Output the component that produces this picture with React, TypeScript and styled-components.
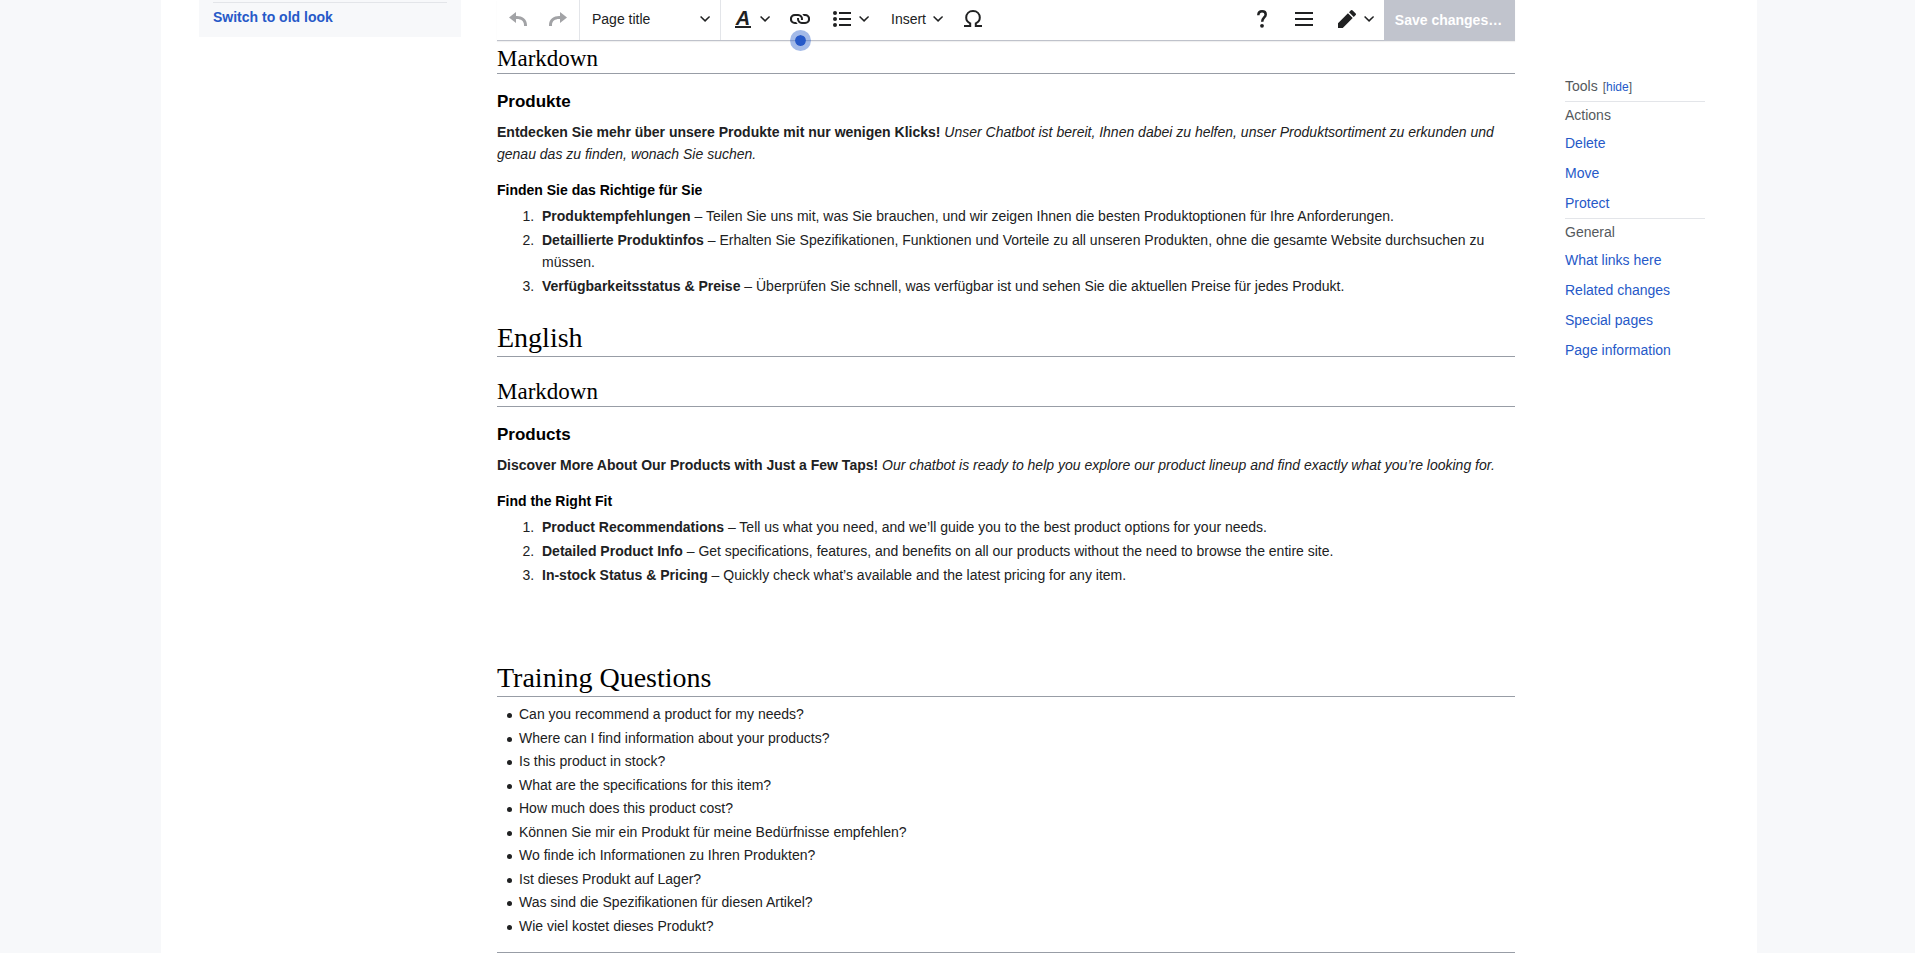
import React from "react";
import styled, { createGlobalStyle } from "styled-components";

const color = {
  text: "#202122",
  heading: "#000000",
  muted: "#54595d",
  link: "#2659c8",
  panel: "#f7f8fa",
  hairline: "#e3e5e9",
  rule: "#989da6",
  toolbarLine: "#bfc2cb",
  disabled: "#c1c4cd",
};

const GlobalStyle = createGlobalStyle`
  *, *::before, *::after { box-sizing: border-box; }
  body {
    margin: 0;
    background: ${color.panel};
    color: ${color.text};
    font-family: "Liberation Sans", Arial, Helvetica, sans-serif;
    font-size: 14px;
    line-height: 22px;
  }
`;

const Viewport = styled.div`
  height: 100vh;
  overflow: hidden;
  padding-left: 3px;
`;

const Container = styled.div`
  display: grid;
  grid-template-columns: 262px minmax(0, 1fr) 154px;
  column-gap: 36px;
  max-width: 1596px;
  min-height: 100%;
  margin: 0 auto;
  padding: 0 52px 0 38px;
  background: #fff;
`;

const MenuPanel = styled.nav`
  align-self: start;
  padding: 2px 14px 9px;
  background: ${color.panel};
`;

const MenuFooter = styled.div`
  padding-top: 3px;
  border-top: 1px solid ${color.hairline};
`;

const Link = styled.a<{ $bold?: boolean }>`
  color: ${color.link};
  font-weight: ${(p) => (p.$bold ? 700 : 400)};
  text-decoration: none;
`;

const Toolbar = styled.div`
  display: flex;
  height: 41px;
  border-bottom: 1px solid ${color.toolbarLine};
  box-shadow: 0 1px 1px rgba(0, 0, 0, 0.06);
`;

const ToolGroup = styled.div<{ $divided?: boolean; $end?: boolean }>`
  display: flex;
  padding: 0 ${(p) => (p.$divided ? "1px" : "0")};
  margin-left: ${(p) => (p.$end ? "auto" : "0")};
  border-right: ${(p) => (p.$divided ? `1px solid ${color.hairline}` : "0")};
`;

const buttonReset = `
  display: flex;
  align-items: center;
  margin: 0;
  border: 0;
  background: none;
  font: inherit;
  color: inherit;
`;

const IconButton = styled.button<{ $wide?: boolean }>`
  ${buttonReset}
  position: relative;
  justify-content: center;
  width: ${(p) => (p.$wide ? "42px" : "40px")};
  padding: 0 0 2px;
  &:disabled { color: #a2a3a6; }
`;

const DropButton = styled.button`
  ${buttonReset}
  gap: 6px;
  padding: 0 9px 2px 12px;
`;

const FormatButton = styled(DropButton)`
  justify-content: space-between;
  width: 141px;
  border-right: 1px solid ${color.hairline};
`;

const SaveButton = styled.button`
  ${buttonReset}
  justify-content: center;
  width: 131px;
  height: 41px;
  padding: 0 2px 2px 0;
  background: ${color.disabled};
  font-weight: 700;
  &:disabled { color: #fff; }
`;

const StyleGlyph = styled.span`
  width: 16px;
  margin: 0 2px;
  border-bottom: 2px solid currentColor;
  font-size: 20px;
  font-style: italic;
  font-weight: 700;
  line-height: 16px;
  text-align: center;
`;

const Beacon = styled.span`
  position: absolute;
  left: 50%;
  top: 100%;
  width: 21px;
  height: 21px;
  margin: -10px 0 0 -10px;
  border: 5px solid rgba(51, 102, 204, 0.45);
  border-radius: 50%;
  background: ${color.link};
  background-clip: padding-box;
`;

const SectionTitle = styled.h2<{ $apart?: boolean }>`
  margin: ${(p) => (p.$apart ? "74px" : "23px")} 0 0;
  border-bottom: 1px solid ${color.rule};
  color: ${color.heading};
  font: 400 28px/36px "Liberation Serif", serif;
`;

const SubsectionTitle = styled.h3<{ $first?: boolean }>`
  margin: ${(p) => (p.$first ? "4px" : "21px")} 0 0;
  border-bottom: 1px solid ${color.rule};
  color: ${color.heading};
  font: 400 23px/28px "Liberation Serif", serif;
`;

const TopicTitle = styled.h4`
  margin: 16px 0 0;
  color: ${color.heading};
  font-size: 17px;
  line-height: 24px;
`;

const MinorTitle = styled.h5`
  margin: 14px 0 0;
  color: ${color.heading};
  font-size: 14px;
`;

const Paragraph = styled.p`
  margin: 7px 0 0;
`;

const Numbered = styled.ol`
  margin: 4px 0 0;
  padding: 0 0 0 45px;
  li + li { margin-top: 2px; }
  li::marker { content: counter(list-item) ".\\00a0\\00a0"; }
`;

const Bulleted = styled.ul`
  margin: 6px 0 0;
  padding: 0 0 0 10px;
  list-style: none;
`;

const Question = styled.li`
  display: flex;
  align-items: center;
  gap: 7px;
  &::before {
    content: "";
    width: 5px;
    height: 5px;
    margin-top: 3px;
    border-radius: 50%;
    background: ${color.text};
  }
  & + & { margin-top: 1px; }
  &:nth-child(even) { margin-top: 2px; }
`;

const CategoryBox = styled.div`
  min-height: 40px;
  margin-top: 15px;
  border: 1px solid ${color.rule};
  background: ${color.panel};
`;

const ToolsAside = styled.aside`
  padding: 75px 0 0 14px;
  color: ${color.muted};
`;

const ToolsHeader = styled.div`
  display: flex;
  align-items: baseline;
  gap: 5px;
`;

const HideButton = styled.button`
  margin: 0;
  padding: 0;
  border: 0;
  background: none;
  color: ${color.muted};
  font: inherit;
  font-size: 12px;
  line-height: 18px;
  span { color: ${color.link}; }
`;

const ToolsGroup = styled.section`
  margin-top: 4px;
  padding-top: 2px;
  border-top: 1px solid ${color.hairline};
`;

const ToolsLinks = styled.ul`
  display: flex;
  flex-direction: column;
  gap: 8px;
  margin: 6px 0 0;
  padding: 0;
  list-style: none;
`;

const Icon = ({ children }: { children: React.ReactNode }) => (
  <svg width="20" height="20" viewBox="0 0 20 20" fill="currentColor" aria-hidden="true">
    {children}
  </svg>
);

const Chevron = () => (
  <svg width="12" height="12" viewBox="0 0 12 12" fill="currentColor" aria-hidden="true">
    <path d="M11.05 3.996l-.965-1.053-4.035 3.86-3.947-3.86L1.05 3.996l5 5 5-5" />
  </svg>
);

type Entry = [string, string];

const germanItems: Entry[] = [
  ["Produktempfehlungen", "Teilen Sie uns mit, was Sie brauchen, und wir zeigen Ihnen die besten Produktoptionen für Ihre Anforderungen."],
  ["Detaillierte Produktinfos", "Erhalten Sie Spezifikationen, Funktionen und Vorteile zu all unseren Produkten, ohne die gesamte Website durchsuchen zu müssen."],
  ["Verfügbarkeitsstatus & Preise", "Überprüfen Sie schnell, was verfügbar ist und sehen Sie die aktuellen Preise für jedes Produkt."],
];

const englishItems: Entry[] = [
  ["Product Recommendations", "Tell us what you need, and we’ll guide you to the best product options for your needs."],
  ["Detailed Product Info", "Get specifications, features, and benefits on all our products without the need to browse the entire site."],
  ["In-stock Status & Pricing", "Quickly check what’s available and the latest pricing for any item."],
];

const questions = [
  "Can you recommend a product for my needs?",
  "Where can I find information about your products?",
  "Is this product in stock?",
  "What are the specifications for this item?",
  "How much does this product cost?",
  "Können Sie mir ein Produkt für meine Bedürfnisse empfehlen?",
  "Wo finde ich Informationen zu Ihren Produkten?",
  "Ist dieses Produkt auf Lager?",
  "Was sind die Spezifikationen für diesen Artikel?",
  "Wie viel kostet dieses Produkt?",
];

const toolGroups = [
  { title: "Actions", links: ["Delete", "Move", "Protect"] },
  { title: "General", links: ["What links here", "Related changes", "Special pages", "Page information"] },
];

const EntryList = ({ items }: { items: Entry[] }) => (
  <Numbered>
    {items.map(([name, text]) => (
      <li key={name}>
        <b>{name}</b> – {text}
      </li>
    ))}
  </Numbered>
);

const EditorToolbar = () => (
  <Toolbar role="toolbar" aria-label="Editor">
    <ToolGroup $divided>
      <IconButton disabled aria-label="Undo">
        <Icon><path d="M1 8.5 8 14v-4h1c4 0 7 2 7 6v1h3v-1c0-6-5-9-10-9H8V3z" /></Icon>
      </IconButton>
      <IconButton disabled aria-label="Redo">
        <Icon><path d="M19 8.5 12 3v4h-1C6 7 1 10 1 16v1h3v-1c0-4 3-6 7-6h1v4z" /></Icon>
      </IconButton>
    </ToolGroup>
    <ToolGroup>
      <FormatButton>Page title<Chevron /></FormatButton>
      <DropButton aria-label="Style text"><StyleGlyph>A</StyleGlyph><Chevron /></DropButton>
      <IconButton aria-label="Link">
        <Icon>
          <path d="M4.83 15h2.91a4.88 4.88 0 0 1-1.55-2H5a3 3 0 1 1 0-6h3a3 3 0 0 1 2.82 4h2.1a4.8 4.8 0 0 0 .08-1 4.94 4.94 0 0 0-4.83-5H4.83a5 5 0 0 0 0 10z" />
          <path d="M15.17 5h-2.91a4.88 4.88 0 0 1 1.55 2H15a3 3 0 1 1 0 6h-3a3 3 0 0 1-2.82-4h-2.1A4.8 4.8 0 0 0 7 10a4.94 4.94 0 0 0 4.83 5h3.34a5 5 0 0 0 0-10z" />
        </Icon>
        <Beacon />
      </IconButton>
      <DropButton aria-label="Structure">
        <Icon>
          <path d="M7 15h12v2H7zm0-6h12v2H7zm0-6h12v2H7z" />
          <circle cx="3" cy="4" r="2" />
          <circle cx="3" cy="10" r="2" />
          <circle cx="3" cy="16" r="2" />
        </Icon>
        <Chevron />
      </DropButton>
      <DropButton>Insert<Chevron /></DropButton>
      <IconButton aria-label="Special character">
        <Icon>
          <path d="M1 17h6.2v-2.6C4.7 13.400 3.200 11.300 3.200 8.600 3.200 4.800 6 2 10 2s6.800 2.800 6.800 6.600c0 2.700-1.500 4.800-4 5.800V17H19" fill="none" stroke="currentColor" strokeWidth="2" />
        </Icon>
      </IconButton>
    </ToolGroup>
    <ToolGroup $end>
      <IconButton $wide aria-label="Help">
        <Icon>
          <path d="M6.300 6.200C6.400 3.700 7.800 2.300 10.100 2.300s3.600 1.300 3.600 3.200c0 3-3.500 3-3.500 7.200" fill="none" stroke="currentColor" strokeWidth="2.500" />
          <circle cx="10" cy="16.800" r="1.900" />
        </Icon>
      </IconButton>
      <IconButton $wide aria-label="Page options">
        <Icon><path d="M1 3v2h18V3zm0 8h18V9H1zm0 6h18v-2H1z" /></Icon>
      </IconButton>
      <DropButton aria-label="Switch editor">
        <Icon>
          <path d="m16.770 8 1.940-2a1 1 0 0 0 0-1.410l-3.340-3.300a1 1 0 0 0-1.410 0L12 3.230zM1 14.250V19h4.750l9.960-9.960-4.750-4.750z" />
        </Icon>
        <Chevron />
      </DropButton>
      <SaveButton disabled>Save changes…</SaveButton>
    </ToolGroup>
  </Toolbar>
);

export default function App() {
  return (
    <Viewport>
      <GlobalStyle />
      <Container>
        <MenuPanel>
          <MenuFooter>
            <Link $bold href="#old-look">Switch to old look</Link>
          </MenuFooter>
        </MenuPanel>

        <main>
          <EditorToolbar />
          <SubsectionTitle $first>Markdown</SubsectionTitle>
          <TopicTitle>Produkte</TopicTitle>
          <Paragraph>
            <b>Entdecken Sie mehr über unsere Produkte mit nur wenigen Klicks!</b>{" "}
            <i>
              Unser Chatbot ist bereit, Ihnen dabei zu helfen, unser Produktsortiment zu erkunden
              und genau das zu finden, wonach Sie suchen.
            </i>
          </Paragraph>
          <MinorTitle>Finden Sie das Richtige für Sie</MinorTitle>
          <EntryList items={germanItems} />

          <SectionTitle>English</SectionTitle>
          <SubsectionTitle>Markdown</SubsectionTitle>
          <TopicTitle>Products</TopicTitle>
          <Paragraph>
            <b>Discover More About Our Products with Just a Few Taps!</b>{" "}
            <i>
              Our chatbot is ready to help you explore our product lineup and find exactly what
              you’re looking for.
            </i>
          </Paragraph>
          <MinorTitle>Find the Right Fit</MinorTitle>
          <EntryList items={englishItems} />

          <SectionTitle $apart>Training Questions</SectionTitle>
          <Bulleted>
            {questions.map((q) => (
              <Question key={q}>{q}</Question>
            ))}
          </Bulleted>
          <CategoryBox />
        </main>

        <ToolsAside>
          <ToolsHeader>
            Tools
            <HideButton>[<span>hide</span>]</HideButton>
          </ToolsHeader>
          {toolGroups.map((group) => (
            <ToolsGroup key={group.title}>
              {group.title}
              <ToolsLinks>
                {group.links.map((label) => (
                  <li key={label}><Link href="#tools">{label}</Link></li>
                ))}
              </ToolsLinks>
            </ToolsGroup>
          ))}
        </ToolsAside>
      </Container>
    </Viewport>
  );
}
